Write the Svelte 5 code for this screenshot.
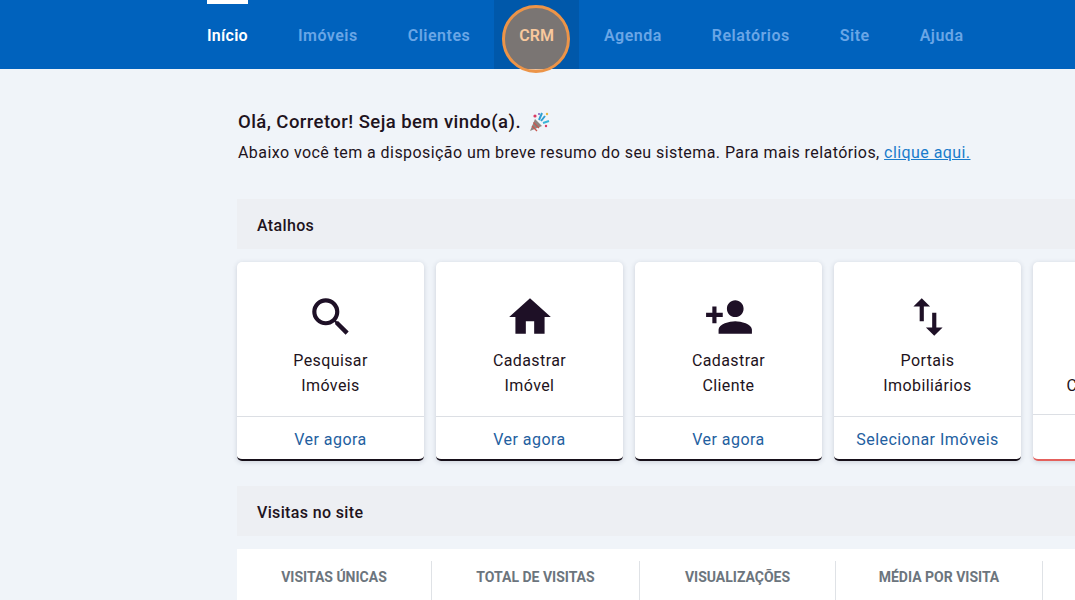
<script>
  const navItems = ["Início", "Imóveis", "Clientes", "CRM", "Agenda", "Relatórios", "Site", "Ajuda"];

  const icons = {
    search:
      "M15.5 14h-.79l-.28-.27A6.471 6.471 0 0 0 16 9.5 6.5 6.5 0 1 0 9.5 16c1.61 0 3.09-.59 4.23-1.57l.27.28v.79l5 4.99L20.49 19l-4.99-5zm-6 0C7.01 14 5 11.99 5 9.5S7.01 5 9.5 5 14 7.01 14 9.5 11.99 14 9.5 14z",
    home: "M10 20v-6h4v6h5v-8h3L12 3 2 12h3v8z",
    personAdd:
      "M15 12c2.21 0 4-1.79 4-4s-1.79-4-4-4-4 1.79-4 4 1.79 4 4 4zm-9-2V7H4v3H1v2h3v3h2v-3h3v-2H6zm9 4c-2.67 0-8 1.34-8 4v2h16v-2c0-2.66-5.33-4-8-4z",
    swap: "M16 17.01V10h-2v7.01h-3L15 21l4-3.99h-3zM9 3L5 6.99h3V14h2V6.99h3L9 3z"
  };

  const cards = [
    { icon: icons.search, lines: ["Pesquisar", "Imóveis"], link: "Ver agora" },
    { icon: icons.home, lines: ["Cadastrar", "Imóvel"], link: "Ver agora" },
    { icon: icons.personAdd, lines: ["Cadastrar", "Cliente"], link: "Ver agora" },
    { icon: icons.swap, lines: ["Portais", "Imobiliários"], link: "Selecionar Imóveis" }
  ];

  const stats = ["Visitas únicas", "Total de visitas", "Visualizações", "Média por visita"];
</script>

<div class="page">
  <nav class="topbar">
    {#each navItems as item, i}
      <a href="#top" class="nav-item" class:active={i == 0} class:crm={item == "CRM"}>{item}</a>
    {/each}
  </nav>

  <main class="content">
    <h1>
      Olá, Corretor! Seja bem vindo(a).
      <svg class="party" viewBox="0 0 22 22" width="22" height="22" aria-hidden="true">
        <path d="M2 20 L7 8 L14 15 Z" fill="#8d8580" />
        <path d="M4 15 L9 20 M5.5 11.5 L11 17" stroke="#c9574f" stroke-width="1.4" />
        <circle cx="7" cy="5" r="1.6" fill="#d93a63" />
        <path d="M11 9 L14 2 M13 10 L17 5" stroke="#2f9fd0" stroke-width="2" />
        <path d="M15 12 L21 10" stroke="#39b3d6" stroke-width="2" />
        <circle cx="19" cy="3" r="1.2" fill="#e9b93f" />
        <circle cx="11" cy="3" r="1" fill="#7b5bc0" />
        <circle cx="18" cy="15" r="1.2" fill="#d93a63" />
      </svg>
    </h1>
    <p class="intro">
      Abaixo você tem a disposição um breve resumo do seu sistema. Para mais relatórios,
      <a href="#top">clique aqui.</a>
    </p>

    <h2 class="section-title">Atalhos</h2>
    <div class="cards">
      {#each cards as card}
        <article class="card">
          <div class="card-body">
            <svg viewBox="0 0 24 24" width="50" height="50" aria-hidden="true"><path d={card.icon} /></svg>
            <p>{card.lines[0]}<br />{card.lines[1]}</p>
          </div>
          <a href="#top" class="card-link">{card.link}</a>
        </article>
      {/each}
      <article class="card alert">
        <div class="card-body">
          <p>Financeiro<br />Contatos Novos</p>
        </div>
        <a href="#top" class="card-link">Ver agora</a>
      </article>
    </div>

    <h2 class="section-title">Visitas no site</h2>
    <div class="stats">
      {#each stats as stat}
        <div class="stat">{stat}</div>
      {/each}
      <div class="stat"></div>
    </div>
  </main>

  <div class="spotlight"></div>
</div>

<style>
  :global(body) {
    margin: 0;
    background: #f0f4f9;
    overflow: hidden;
  }
  .page {
    position: relative;
    width: 1075px;
    height: 600px;
    overflow: hidden;
    font-family: Roboto, "Liberation Sans", sans-serif;
    color: #1e1320;
  }
  a {
    text-decoration: none;
  }
  .topbar {
    display: flex;
    height: 69px;
    padding-left: 182px;
    background: #0062bd;
  }
  .nav-item {
    position: relative;
    display: flex;
    align-items: center;
    padding: 2px 25px 0;
    font-size: 16px;
    font-weight: 600;
    letter-spacing: 0.5px;
    color: #6aa6e6;
  }
  .nav-item.active {
    color: #fff;
    letter-spacing: 0.25px;
  }
  .nav-item.active::before {
    content: "";
    position: absolute;
    top: 0;
    left: 25px;
    right: 25px;
    height: 4px;
    background: #fff;
  }
  .nav-item.crm {
    background: #0058aa;
    color: #fff;
    letter-spacing: 0;
    margin-left: -1px;
  }
  .spotlight {
    position: absolute;
    left: 502px;
    top: 5px;
    width: 62px;
    height: 62px;
    border: 3px solid #ec9448;
    border-radius: 50%;
    background: rgba(244, 146, 60, 0.5);
  }
  .content {
    width: 1100px;
    margin-left: 237px;
    padding-top: 41px;
  }
  h1 {
    display: flex;
    align-items: center;
    gap: 7px;
    margin: 0 0 7px 1px;
    height: 24px;
    font-size: 18.5px;
    font-weight: 500;
    letter-spacing: 0.44px;
  }
  .party {
    flex: none;
  }
  .intro {
    margin: 0 0 34px 1px;
    font-size: 16px;
    line-height: 24px;
    letter-spacing: 0.43px;
  }
  .intro a {
    color: #1a7ccb;
    text-decoration: underline;
  }
  .section-title {
    margin: 0;
    height: 50px;
    padding-left: 20px;
    font-size: 16px;
    font-weight: 500;
    letter-spacing: 0.35px;
    line-height: 54px;
    background: #edeff3;
  }
  .cards {
    display: flex;
    gap: 12px;
    margin: 13px 0 25px;
  }
  .card {
    display: flex;
    flex: none;
    flex-direction: column;
    width: 187px;
    height: 199px;
    box-sizing: border-box;
    border-bottom: 2px solid #17101a;
    border-radius: 5px;
    background: #fff;
    box-shadow: 0 1px 5px rgba(40, 50, 80, 0.18);
  }
  .card.alert {
    border-bottom-color: #e4605c;
  }
  .card-body {
    flex: 1;
    padding-top: 30px;
    text-align: center;
    border-bottom: 1px solid #dcdfe4;
  }
  .card-body svg {
    display: block;
    margin: 0 auto;
    fill: #1e1026;
  }
  .card-body p {
    margin: 6px 0 0;
    font-size: 16px;
    line-height: 25px;
    letter-spacing: 0.4px;
  }
  .card.alert .card-body {
    flex: none;
    box-sizing: border-box;
    height: 153px;
    padding-top: 80px;
  }
  .card-link {
    height: 42px;
    font-size: 16px;
    line-height: 46px;
    letter-spacing: 0.45px;
    text-align: center;
    color: #23609f;
  }
  .stats {
    display: flex;
    height: 51px;
    box-sizing: border-box;
    padding-top: 12px;
    margin-top: 13px;
    background: #fff;
  }
  .stat {
    flex: none;
    box-sizing: border-box;
    width: 195px;
    height: 39px;
    border-right: 1px solid #dfe2e6;
    padding-top: 8px;
    font-size: 14px;
    font-weight: 700;
    text-align: center;
    text-transform: uppercase;
    color: #6c757d;
  }
  .stat:nth-child(2) {
    width: 208px;
  }
  .stat:nth-child(3) {
    width: 196px;
  }
  .stat:nth-child(4) {
    width: 207px;
  }
</style>
